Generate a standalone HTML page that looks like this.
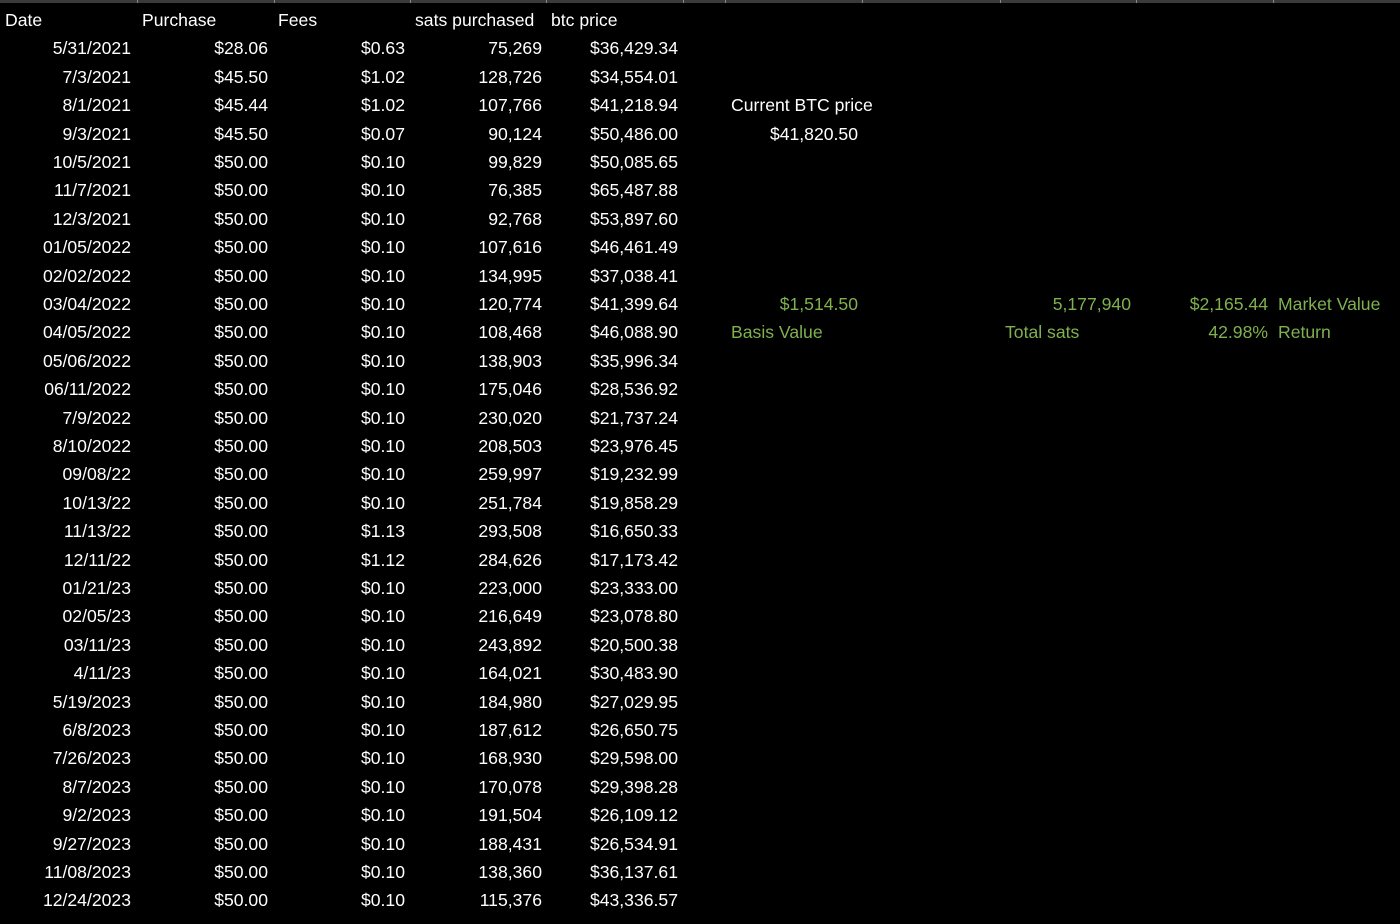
<!DOCTYPE html>
<html><head><meta charset="utf-8"><style>
body{margin:0;background:#000;width:1400px;height:924px;overflow:hidden;font-family:"Liberation Sans",Arial,sans-serif;font-size:17.6px;color:#fff;position:relative}
.strip{position:absolute;left:0;top:0;width:1400px;height:3px;background:#3a3a3a}
.sep{position:absolute;top:0;width:1px;height:3px;background:#888}
.row{position:absolute;left:0;width:1400px;height:28px;line-height:28px}
.row span{position:absolute;top:0;white-space:nowrap}
.a{left:0;width:131px;text-align:right}
.b{left:140px;width:128px;text-align:right}
.c{left:280px;width:125px;text-align:right}
.d{left:412px;width:130px;text-align:right}
.e{left:550px;width:128px;text-align:right}
.g{color:#7fb24f}
</style></head><body>
<div class="strip"></div>
<div class="sep" style="left:137px"></div><div class="sep" style="left:274px"></div><div class="sep" style="left:410px"></div><div class="sep" style="left:546px"></div><div class="sep" style="left:683px"></div><div class="sep" style="left:725px"></div><div class="sep" style="left:862px"></div><div class="sep" style="left:1000px"></div><div class="sep" style="left:1136px"></div><div class="sep" style="left:1273px"></div>

<div class="row" style="top:6px"><span style="left:5px">Date</span><span style="left:142px">Purchase</span><span style="left:278px">Fees</span><span style="left:415px">sats purchased</span><span style="left:551px">btc price</span></div>
<div class="row" style="top:34.4px"><span class="a">5/31/2021</span><span class="b">$28.06</span><span class="c">$0.63</span><span class="d">75,269</span><span class="e">$36,429.34</span></div>
<div class="row" style="top:62.8px"><span class="a">7/3/2021</span><span class="b">$45.50</span><span class="c">$1.02</span><span class="d">128,726</span><span class="e">$34,554.01</span></div>
<div class="row" style="top:91.2px"><span class="a">8/1/2021</span><span class="b">$45.44</span><span class="c">$1.02</span><span class="d">107,766</span><span class="e">$41,218.94</span><span style="left:731px">Current BTC price</span></div>
<div class="row" style="top:119.6px"><span class="a">9/3/2021</span><span class="b">$45.50</span><span class="c">$0.07</span><span class="d">90,124</span><span class="e">$50,486.00</span><span style="left:730px;width:128px;text-align:right">$41,820.50</span></div>
<div class="row" style="top:148px"><span class="a">10/5/2021</span><span class="b">$50.00</span><span class="c">$0.10</span><span class="d">99,829</span><span class="e">$50,085.65</span></div>
<div class="row" style="top:176.4px"><span class="a">11/7/2021</span><span class="b">$50.00</span><span class="c">$0.10</span><span class="d">76,385</span><span class="e">$65,487.88</span></div>
<div class="row" style="top:204.8px"><span class="a">12/3/2021</span><span class="b">$50.00</span><span class="c">$0.10</span><span class="d">92,768</span><span class="e">$53,897.60</span></div>
<div class="row" style="top:233.2px"><span class="a">01/05/2022</span><span class="b">$50.00</span><span class="c">$0.10</span><span class="d">107,616</span><span class="e">$46,461.49</span></div>
<div class="row" style="top:261.6px"><span class="a">02/02/2022</span><span class="b">$50.00</span><span class="c">$0.10</span><span class="d">134,995</span><span class="e">$37,038.41</span></div>
<div class="row" style="top:290px"><span class="a">03/04/2022</span><span class="b">$50.00</span><span class="c">$0.10</span><span class="d">120,774</span><span class="e">$41,399.64</span><span class="g" style="left:730px;width:128px;text-align:right">$1,514.50</span><span class="g" style="left:1000px;width:131px;text-align:right">5,177,940</span><span class="g" style="left:1140px;width:128px;text-align:right">$2,165.44</span><span class="g" style="left:1278px">Market Value</span></div>
<div class="row" style="top:318.4px"><span class="a">04/05/2022</span><span class="b">$50.00</span><span class="c">$0.10</span><span class="d">108,468</span><span class="e">$46,088.90</span><span class="g" style="left:731px">Basis Value</span><span class="g" style="left:1005px">Total sats</span><span class="g" style="left:1140px;width:128px;text-align:right">42.98%</span><span class="g" style="left:1278px">Return</span></div>
<div class="row" style="top:346.8px"><span class="a">05/06/2022</span><span class="b">$50.00</span><span class="c">$0.10</span><span class="d">138,903</span><span class="e">$35,996.34</span></div>
<div class="row" style="top:375.2px"><span class="a">06/11/2022</span><span class="b">$50.00</span><span class="c">$0.10</span><span class="d">175,046</span><span class="e">$28,536.92</span></div>
<div class="row" style="top:403.6px"><span class="a">7/9/2022</span><span class="b">$50.00</span><span class="c">$0.10</span><span class="d">230,020</span><span class="e">$21,737.24</span></div>
<div class="row" style="top:432px"><span class="a">8/10/2022</span><span class="b">$50.00</span><span class="c">$0.10</span><span class="d">208,503</span><span class="e">$23,976.45</span></div>
<div class="row" style="top:460.4px"><span class="a">09/08/22</span><span class="b">$50.00</span><span class="c">$0.10</span><span class="d">259,997</span><span class="e">$19,232.99</span></div>
<div class="row" style="top:488.8px"><span class="a">10/13/22</span><span class="b">$50.00</span><span class="c">$0.10</span><span class="d">251,784</span><span class="e">$19,858.29</span></div>
<div class="row" style="top:517.2px"><span class="a">11/13/22</span><span class="b">$50.00</span><span class="c">$1.13</span><span class="d">293,508</span><span class="e">$16,650.33</span></div>
<div class="row" style="top:545.6px"><span class="a">12/11/22</span><span class="b">$50.00</span><span class="c">$1.12</span><span class="d">284,626</span><span class="e">$17,173.42</span></div>
<div class="row" style="top:574px"><span class="a">01/21/23</span><span class="b">$50.00</span><span class="c">$0.10</span><span class="d">223,000</span><span class="e">$23,333.00</span></div>
<div class="row" style="top:602.4px"><span class="a">02/05/23</span><span class="b">$50.00</span><span class="c">$0.10</span><span class="d">216,649</span><span class="e">$23,078.80</span></div>
<div class="row" style="top:630.8px"><span class="a">03/11/23</span><span class="b">$50.00</span><span class="c">$0.10</span><span class="d">243,892</span><span class="e">$20,500.38</span></div>
<div class="row" style="top:659.2px"><span class="a">4/11/23</span><span class="b">$50.00</span><span class="c">$0.10</span><span class="d">164,021</span><span class="e">$30,483.90</span></div>
<div class="row" style="top:687.6px"><span class="a">5/19/2023</span><span class="b">$50.00</span><span class="c">$0.10</span><span class="d">184,980</span><span class="e">$27,029.95</span></div>
<div class="row" style="top:716px"><span class="a">6/8/2023</span><span class="b">$50.00</span><span class="c">$0.10</span><span class="d">187,612</span><span class="e">$26,650.75</span></div>
<div class="row" style="top:744.4px"><span class="a">7/26/2023</span><span class="b">$50.00</span><span class="c">$0.10</span><span class="d">168,930</span><span class="e">$29,598.00</span></div>
<div class="row" style="top:772.8px"><span class="a">8/7/2023</span><span class="b">$50.00</span><span class="c">$0.10</span><span class="d">170,078</span><span class="e">$29,398.28</span></div>
<div class="row" style="top:801.2px"><span class="a">9/2/2023</span><span class="b">$50.00</span><span class="c">$0.10</span><span class="d">191,504</span><span class="e">$26,109.12</span></div>
<div class="row" style="top:829.6px"><span class="a">9/27/2023</span><span class="b">$50.00</span><span class="c">$0.10</span><span class="d">188,431</span><span class="e">$26,534.91</span></div>
<div class="row" style="top:858px"><span class="a">11/08/2023</span><span class="b">$50.00</span><span class="c">$0.10</span><span class="d">138,360</span><span class="e">$36,137.61</span></div>
<div class="row" style="top:886.4px"><span class="a">12/24/2023</span><span class="b">$50.00</span><span class="c">$0.10</span><span class="d">115,376</span><span class="e">$43,336.57</span></div>
</body></html>
